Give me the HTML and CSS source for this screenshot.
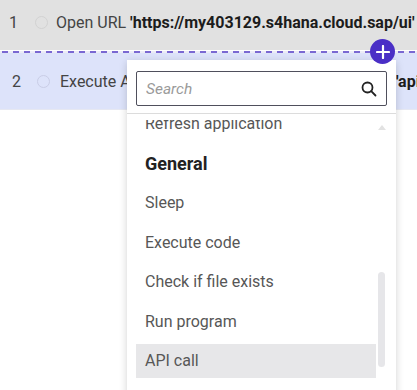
FILE: index.html
```html
<!DOCTYPE html>
<html lang="en">
<head>
  <meta charset="UTF-8">
  <meta name="viewport" content="width=device-width, initial-scale=1.0">
  <title>Steps</title>
  <link rel="stylesheet" href="styles.css">
</head>
<body>
  <div class="steps">
    <div class="step">
      <span class="step-num">1</span>
      <span class="step-dot"></span>
      <span class="step-text">Open URL <b>'https://my403129.s4hana.cloud.sap/ui'</b></span>
    </div>
    <div class="step-divider"></div>
    <div class="step step-active">
      <span class="step-num">2</span>
      <span class="step-dot"></span>
      <span class="step-text">Execute API call <b>'DELETE'</b> with request headers <b>'api/v1/orders'</b></span>
    </div>
  </div>

  <button class="add-button" aria-label="Add step">
    <svg width="14" height="14" viewBox="0 0 14 14">
      <path d="M7 1v12M1 7h12" stroke="#fff" stroke-width="2.2" stroke-linecap="round"/>
    </svg>
  </button>

  <div class="picker">
    <div class="picker-header">
      <div class="search-box">
        <input type="text" placeholder="Search">
        <svg class="search-icon" width="16" height="16" viewBox="0 0 16 16">
          <circle cx="6.5" cy="6.5" r="5" fill="none" stroke="#222" stroke-width="1.8"/>
          <path d="M10.2 10.2l4.3 4.3" stroke="#222" stroke-width="1.8" stroke-linecap="round"/>
        </svg>
      </div>
    </div>
    <div class="picker-body">
      <ul class="picker-list">
        <li class="picker-item">Refresh application</li>
        <li class="picker-group">General</li>
        <li class="picker-item">Sleep</li>
        <li class="picker-item">Execute code</li>
        <li class="picker-item">Check if file exists</li>
        <li class="picker-item">Run program</li>
        <li class="picker-item selected">API call</li>
      </ul>
      <div class="scrollbar">
        <span class="scroll-up"></span>
        <span class="scroll-thumb"></span>
      </div>
    </div>
  </div>
</body>
</html>
```

FILE: styles.css
```css
body {
  margin: 0;
  font-family: Roboto, 'Noto Sans', sans-serif;
  background-color: #fff;
  color: #444;
  overflow: hidden;
}

.steps {
  width: 417px;
}

.step {
  display: flex;
  align-items: center;
  height: 50px;
  box-sizing: border-box;
  padding: 0 0 6px 9px;
  background-color: #e1e1e1;
  font-size: 16px;
  white-space: nowrap;
  overflow: hidden;
}

.step-num {
  width: 26px;
  flex-shrink: 0;
}

.step-dot {
  width: 13px;
  height: 13px;
  box-sizing: border-box;
  border: 1px solid #d2d2d2;
  border-radius: 50%;
  flex-shrink: 0;
  margin-right: 8px;
}

.step-text b {
  color: #1c1c1c;
  font-weight: 700;
}

.step-divider {
  height: 2px;
  margin-top: 1px;
  background: repeating-linear-gradient(90deg, #7a68d2 0 6px, #ececf6 6px 11px);
  background-position: 2px 0;
}

.step-active {
  height: 57px;
  padding: 0 0 0 12px;
  background-color: #dde3fa;
  border-bottom: 1px solid #e6e8f2;
}

.step-active .step-num {
  width: 25px;
}

.step-active .step-dot {
  border-color: #c9cde6;
  margin-right: 10px;
}

.add-button {
  position: absolute;
  left: 370px;
  top: 39px;
  width: 25px;
  height: 25px;
  padding: 0;
  border: none;
  border-radius: 50%;
  background-color: #4a2fc6;
  display: flex;
  align-items: center;
  justify-content: center;
  z-index: 2;
}

.picker {
  position: absolute;
  left: 127px;
  top: 60px;
  width: 269px;
  height: 340px;
  background-color: #fff;
  box-shadow: 0 2px 8px rgba(0, 0, 0, 0.18);
  display: flex;
  flex-direction: column;
}

.picker-header {
  padding: 11px 9px 7px 9px;
  border-bottom: 1px solid #dcdcdc;
}

.search-box {
  display: flex;
  align-items: center;
  height: 35px;
  box-sizing: border-box;
  border: 1px solid #4f4f5c;
  border-radius: 2px;
  padding: 0 9px 0 9px;
}

.search-box input {
  flex: 1;
  min-width: 0;
  border: none;
  outline: none;
  padding: 0;
  font-family: inherit;
  font-size: 15.5px;
  font-style: italic;
  background: transparent;
}

.search-box input::placeholder {
  color: #9a9a9a;
}

.search-icon {
  flex-shrink: 0;
}

.picker-body {
  flex: 1;
  display: flex;
  overflow: hidden;
  margin-top: 6px;
  padding: 0 0 0 9px;
}

.picker-list {
  list-style: none;
  margin: -13px 0 0 0;
  padding: 0;
  width: 240px;
  display: flex;
  flex-direction: column;
  gap: 5.5px;
}

.picker-item,
.picker-group {
  height: 34px;
  line-height: 34px;
  padding-left: 9px;
  flex-shrink: 0;
}

.picker-item {
  font-size: 16px;
  color: #575757;
}

.picker-group {
  font-size: 18px;
  font-weight: 700;
  color: #222;
}

.picker-item.selected {
  background-color: #e7e7e9;
}

.scrollbar {
  position: relative;
  width: 7px;
  margin-left: 2px;
}

.scroll-up {
  position: absolute;
  left: 0;
  top: 5px;
  width: 0;
  height: 0;
  border-left: 4px solid transparent;
  border-right: 4px solid transparent;
  border-bottom: 5px solid #e2e2e2;
}

.scroll-thumb {
  position: absolute;
  left: 0;
  top: 152px;
  width: 7px;
  height: 95px;
  border-radius: 4px;
  background-color: #e6e6e9;
}
```
